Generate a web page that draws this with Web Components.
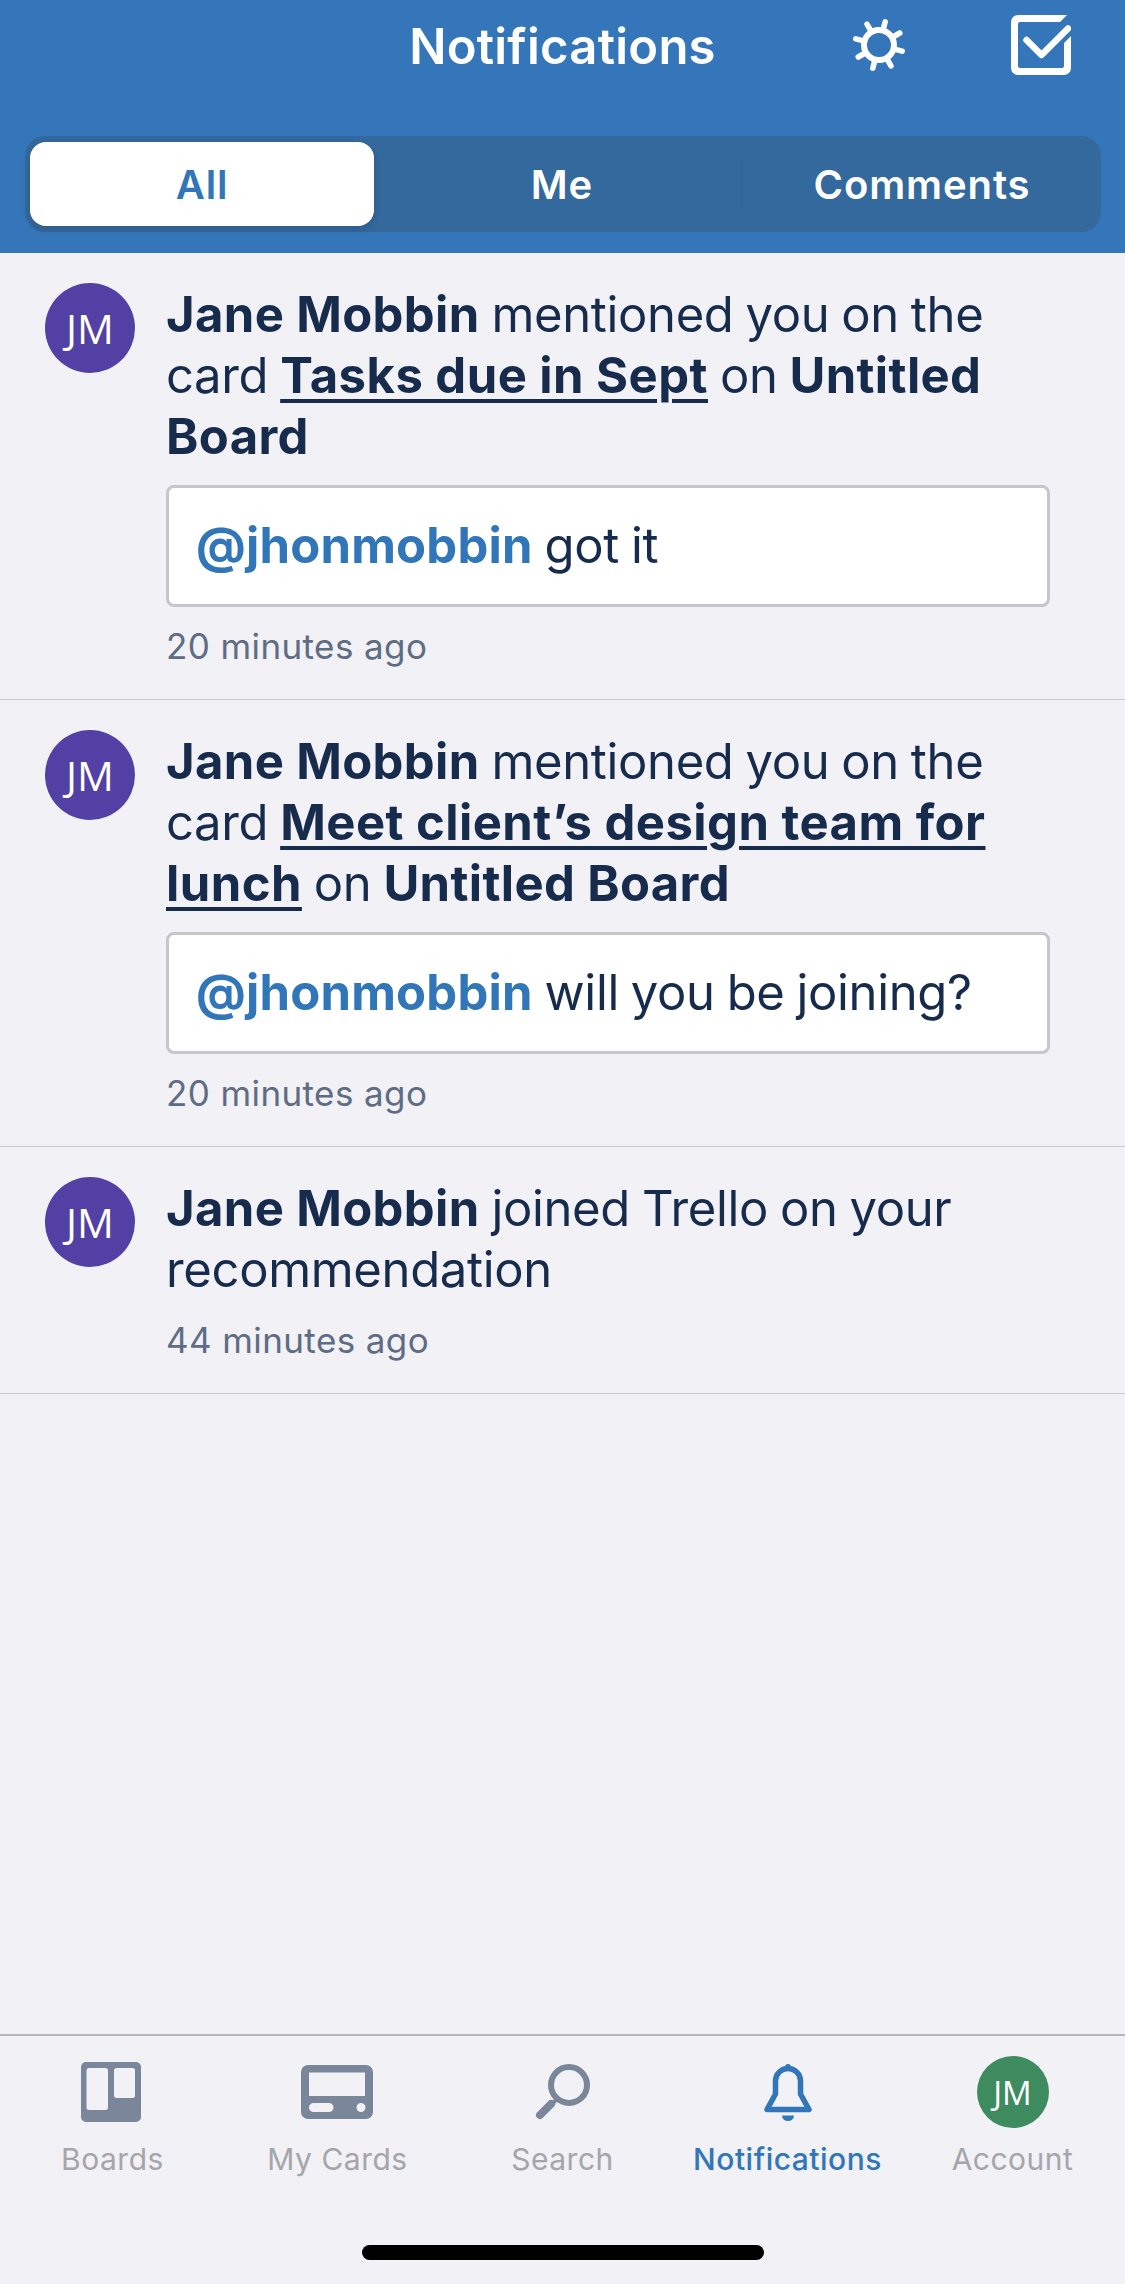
<!DOCTYPE html>
<html>
<head>
<meta charset="utf-8">
<style>
  html, body { margin: 0; padding: 0; background: #f1f1f6; }
  body { font-family: Inter, "Liberation Sans", sans-serif; }
</style>
</head>
<body>
<app-screen>
  <app-header slot="header" title="Notifications">
    <seg-tab active>All</seg-tab>
    <seg-tab>Me</seg-tab>
    <seg-tab divider>Comments</seg-tab>
  </app-header>

  <notif-item time="20 minutes ago" comment>
    <b>Jane Mobbin</b> mentioned you on the card <a>Tasks due in Sept</a> on <b>Untitled Board</b>
    <comment-box slot="comment" mention="@jhonmobbin">got it</comment-box>
  </notif-item>
  <notif-item time="20 minutes ago" comment>
    <b>Jane Mobbin</b> mentioned you on the card <a>Meet client’s design team for lunch</a> on <b>Untitled Board</b>
    <comment-box slot="comment" mention="@jhonmobbin">will you be joining?</comment-box>
  </notif-item>
  <notif-item time="44 minutes ago">
    <b>Jane Mobbin</b> joined Trello on your recommendation
  </notif-item>

  <tab-bar slot="footer">
    <tab-item label="Boards">
      <svg style="margin-right:3px" width="60" height="60" viewBox="0 0 60 60"><path fill="#7a869a" fill-rule="evenodd" d="M5 0H55a5 5 0 0 1 5 5V55a5 5 0 0 1-5 5H5a5 5 0 0 1-5-5V5a5 5 0 0 1 5-5ZM8 6a2.500 2.500 0 0 0-2.500 2.500V45.500A2.500 2.500 0 0 0 8 48H24.500A2.500 2.500 0 0 0 27 45.500V8.500A2.500 2.500 0 0 0 24.500 6ZM35.500 6A2.500 2.500 0 0 0 33 8.500V33.500A2.500 2.500 0 0 0 35.500 36H51.500A2.500 2.500 0 0 0 54 33.500V8.500A2.500 2.500 0 0 0 51.500 6Z"/></svg>
    </tab-item>
    <tab-item label="My Cards">
      <svg style="margin-right:2px" width="72" height="54" viewBox="0 0 72 54"><path fill="#7a869a" fill-rule="evenodd" d="M7 0H65a7 7 0 0 1 7 7V47a7 7 0 0 1-7 7H7a7 7 0 0 1-7-7V7a7 7 0 0 1 7-7ZM8 7.500V31H64V7.500ZM12.500 38a4.500 4.500 0 0 0 0 9H28a4.500 4.500 0 0 0 0-9ZM60 38a4.500 4.500 0 1 0 0 9a4.500 4.500 0 0 0 0-9Z"/></svg>
    </tab-item>
    <tab-item label="Search">
      <svg style="margin-right:2px" width="56" height="56" viewBox="0 0 56 56" fill="none" stroke="#7a869a"><ellipse cx="35" cy="21" rx="18" ry="18" stroke-width="6"/><path d="M24 34L19 39" stroke-width="4"/><path d="M17 40L6 51" stroke-width="8" stroke-linecap="round"/></svg>
    </tab-item>
    <tab-item label="Notifications" active>
      <svg width="48" height="57" viewBox="0 0 48 57"><path fill="none" stroke="#3076b8" stroke-width="5.500" stroke-linejoin="round" d="M3 45.500L11.500 30V17a12.500 12.500 0 0 1 25 0V30L45 45.500Z"/><circle cx="24" cy="2.800" r="2.800" fill="#3076b8"/><path fill="#3076b8" d="M18 51.500H30A6 5.500 0 0 1 18 51.500Z"/></svg>
    </tab-item>
    <tab-item label="Account">
      <user-avatar size="72" color="#3d8b5f" font="33">JM</user-avatar>
    </tab-item>
  </tab-bar>
</app-screen>

<script>
  function define(name, html, cls) {
    const template = document.createElement('template');
    template.innerHTML = html;
    customElements.define(name, class extends (cls || HTMLElement) {
      constructor() {
        super();
        this.attachShadow({mode: 'open'}).appendChild(template.content.cloneNode(true));
      }
    });
  }

  define('app-screen', `
    <style>
      :host { display: flex; flex-direction: column; width: 1125px; height: 2284px; background: #f1f1f6; overflow: hidden; }
      main { flex: 1; min-height: 0; }
    </style>
    <slot name="header"></slot>
    <main><slot></slot></main>
    <slot name="footer"></slot>`);

  const gearTeeth = [15, 60, 105, 150, 195, 240, 285, 330]
    .map(a => `<line x1="30" y1="14" x2="30" y2="6"  transform="rotate(${a} 30 30)"/>`).join('');

  define('app-header', `
    <style>
      :host { display: block; background: #3476b9; color: #fff; height: 253px; box-sizing: border-box; }
      .top { display: grid; grid-template-columns: 1fr auto 1fr; align-items: center; height: 92px; }
      .title { grid-column: 2; font-size: 49px; font-weight: 600; letter-spacing: .25px; }
      .actions { display: flex; justify-content: flex-end; align-items: center; gap: 102px; padding-right: 54px; margin-top: -3px; }
      svg { display: block; }
      .segments { display: grid; grid-template-columns: repeat(3, 344px); gap: 16px; height: 96px; box-sizing: border-box;
        margin: 44px 24px 0 25px; padding: 6px 7px 6px 5px; background: #33699c; border-radius: 20px; }
    </style>
    <div class="top">
      <div class="title" id="title"></div>
      <div class="actions">
        <svg width="60" height="60" viewBox="0 0 60 60" fill="none" stroke="#fff" stroke-linecap="round">
          <circle cx="30" cy="30" r="15" stroke-width="6"/>
          <g stroke-width="5.500">${gearTeeth}</g>
        </svg>
        <svg width="60" height="60" viewBox="0 0 60 60" fill="#fff">
          <path d="M7 0H56L49 7H9a2 2 0 0 0-2 2V51a2 2 0 0 0 2 2H51a2 2 0 0 0 2-2V28L60 21V53a7 7 0 0 1-7 7H7a7 7 0 0 1-7-7V7a7 7 0 0 1 7-7Z"/>
          <path d="M15.500 25L30.500 40L57 13.500" fill="none" stroke="#fff" stroke-width="6.500" stroke-linecap="round" stroke-linejoin="round"/>
        </svg>
      </div>
    </div>
    <div class="segments"><slot></slot></div>`, class extends HTMLElement {
      connectedCallback() {
        this.shadowRoot.getElementById('title').textContent = this.getAttribute('title');
      }
    });

  define('seg-tab', `
    <style>
      :host { display: flex; position: relative; align-items: center; justify-content: center; font-size: 40px; font-weight: 600; letter-spacing: .9px; color: #fff; border-radius: 16px; }
      :host([active]) { background: #fff; color: #3076b8; box-shadow: 0 3px 8px rgba(0,0,0,.14); }
      :host([divider])::before { content: ""; position: absolute; left: -9px; top: 18px; bottom: 18px; width: 2px; background: #2f6596; }
    </style>
    <slot></slot>`);

  define('user-avatar', `
    <style>
      :host { display: flex; flex: none; align-items: center; justify-content: center; border-radius: 50%; color: #fff; font-family: "Open Sans", sans-serif; font-weight: 500; }
    </style>
    <slot></slot>`, class extends HTMLElement {
      connectedCallback() {
        const size = this.getAttribute('size');
        this.style.width = this.style.height = size + 'px';
        this.style.background = this.getAttribute('color');
        this.style.fontSize = this.getAttribute('font') + 'px';
      }
    });

  define('notif-item', `
    <style>
      :host { display: flex; gap: 31px; padding: 30px 75px 0 45px; border-bottom: 1.500px solid #c8c8ce; box-sizing: border-box; color: #172b4d; }
      :host([comment]) { height: 447px; }
      :host(:not([comment])) { height: 247px; }
      .body { flex: 1; min-width: 0; }
      .text { font-size: 49px; line-height: 61px; letter-spacing: -.35px; word-spacing: -1.5px; margin-top: .5px; }
      ::slotted(b) { font-weight: 700; letter-spacing: .35px; word-spacing: 0; }
      ::slotted(a) { font-weight: 700; letter-spacing: .45px; word-spacing: 0; text-decoration: underline; text-decoration-thickness: 4px; text-underline-offset: 6px; }
      .time { font-size: 35px; line-height: 44px; color: #5e6c84; margin-top: 18.500px; letter-spacing: .4px; }
      :host([comment]) .time { margin-top: 17.500px; }
      slot[name=comment]::slotted(*) { margin-top: 18px; }
    </style>
    <user-avatar size="90" color="#5240a4" font="41">JM</user-avatar>
    <div class="body">
      <div class="text"><slot></slot></div>
      <slot name="comment"></slot>
      <div class="time" id="time"></div>
    </div>`, class extends HTMLElement {
      connectedCallback() {
        this.shadowRoot.getElementById('time').textContent = this.getAttribute('time');
      }
    });

  define('comment-box', `
    <style>
      :host { display: flex; align-items: center; height: 122px; box-sizing: border-box; padding: 0 27px; background: #fff; border: 3px solid #c6c6cc; border-radius: 8px; font-size: 49px; letter-spacing: -.35px; word-spacing: -1.5px; color: #172b4d; }
      span { font-weight: 700; letter-spacing: .2px; color: #3076b8; }
    </style>
    <div><span id="m"></span> <slot></slot></div>`, class extends HTMLElement {
      connectedCallback() {
        this.shadowRoot.getElementById('m').textContent = this.getAttribute('mention');
      }
    });

  define('tab-bar', `
    <style>
      :host { display: block; height: 250px; box-sizing: border-box; border-top: 2px solid #b4b4ba; }
      .tabs { display: grid; grid-template-columns: repeat(5, 225px); height: 196px; }
      .home { width: 402px; height: 15px; margin: 13px auto 0; background: #000; border-radius: 8px; }
    </style>
    <div class="tabs"><slot></slot></div>
    <div class="home"></div>`);

  define('tab-item', `
    <style>
      :host { display: flex; flex-direction: column; align-items: center; color: #a5a5aa; }
      :host([active]) { color: #3076b8; font-weight: 500; }
      .icon { display: flex; align-items: center; justify-content: center; height: 72px; margin-top: 20px; }
      .label { font-size: 30px; line-height: 36px; margin-top: 13px; letter-spacing: .5px; }
      ::slotted(svg) { display: block; }
    </style>
    <div class="icon"><slot></slot></div>
    <div class="label" id="label"></div>`, class extends HTMLElement {
      connectedCallback() {
        this.shadowRoot.getElementById('label').textContent = this.getAttribute('label');
      }
    });
</script>
</body>
</html>
